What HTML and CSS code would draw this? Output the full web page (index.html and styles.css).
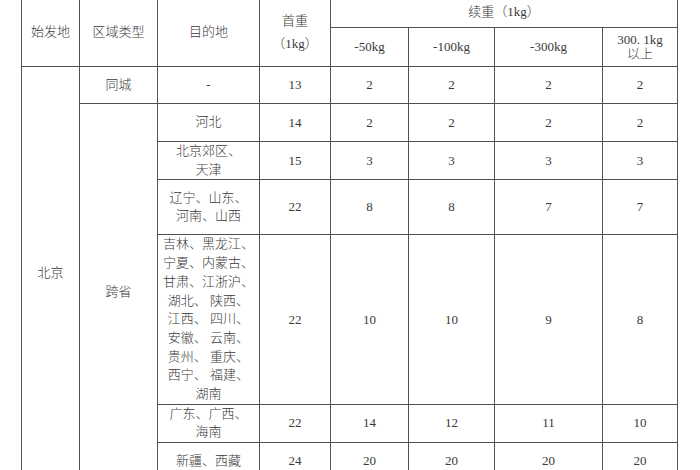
FILE: index.html
```html
<!DOCTYPE html>
<html lang="zh-CN">
<head>
<meta charset="utf-8">
<link rel="stylesheet" href="styles.css">
</head>
<body>
<table class="rates">
  <colgroup>
    <col class="w-origin">
    <col class="w-type">
    <col class="w-dest">
    <col class="w-first">
    <col class="w-50">
    <col class="w-100">
    <col class="w-300">
    <col class="w-over">
  </colgroup>
  <tr class="row-h1">
    <th rowspan="2">始发地</th>
    <th rowspan="2">区域类型</th>
    <th rowspan="2">目的地</th>
    <th rowspan="2" class="stack">首重<br>（1kg）</th>
    <th colspan="4">续重（1kg）</th>
  </tr>
  <tr class="row-h2">
    <th>-50kg</th>
    <th>-100kg</th>
    <th>-300kg</th>
    <th class="tight">300. 1kg<br>以上</th>
  </tr>
  <tr class="row-a">
    <td rowspan="7">北京</td>
    <td>同城</td>
    <td>-</td>
    <td>13</td><td>2</td><td>2</td><td>2</td><td>2</td>
  </tr>
  <tr class="row-b">
    <td rowspan="6">跨省</td>
    <td class="dest">河北</td>
    <td>14</td><td>2</td><td>2</td><td>2</td><td>2</td>
  </tr>
  <tr class="row-b">
    <td class="dest">北京郊区、<br>天津</td>
    <td>15</td><td>3</td><td>3</td><td>3</td><td>3</td>
  </tr>
  <tr class="row-c">
    <td class="dest">辽宁、山东、<br>河南、山西</td>
    <td>22</td><td>8</td><td>8</td><td>7</td><td>7</td>
  </tr>
  <tr class="row-d">
    <td class="dest">吉林、黑龙江、<br>宁夏、内蒙古、<br>甘肃、江浙沪、<br>湖北、 陕西、<br>江西、 四川、<br>安徽、 云南、<br>贵州、 重庆、<br>西宁、 福建、<br>湖南</td>
    <td>22</td><td>10</td><td>10</td><td>9</td><td>8</td>
  </tr>
  <tr class="row-b">
    <td class="dest">广东、广西、<br>海南</td>
    <td>22</td><td>14</td><td>12</td><td>11</td><td>10</td>
  </tr>
  <tr class="row-e">
    <td class="dest">新疆、西藏</td>
    <td>24</td><td>20</td><td>20</td><td>20</td><td>20</td>
  </tr>
</table>
</body>
</html>
```

FILE: styles.css
```css
html, body {
  margin: 0;
  padding: 0;
  background: #ffffff;
}

body {
  font-family: "Liberation Serif", "Noto Sans CJK SC", serif;
  font-size: 13px;
  font-weight: 300;
  color: #3a3a3a;
}

.rates {
  border-collapse: collapse;
  table-layout: fixed;
  width: 657px;
  margin: -4px 0 0 21px;
}

.w-origin { width: 58px; }
.w-type { width: 78px; }
.w-dest { width: 102px; }
.w-first { width: 71px; }
.w-50 { width: 78px; }
.w-100 { width: 86px; }
.w-300 { width: 108px; }
.w-over { width: 75px; }

.rates th,
.rates td {
  border: 1px solid #505050;
  padding: 0 2px;
  text-align: center;
  vertical-align: middle;
  font-weight: 300;
  line-height: 18px;
  white-space: nowrap;
  overflow: hidden;
}

.rates .stack { line-height: 23px; }
.rates .tight { line-height: 14px; }
.rates .dest { line-height: 18.7px; }

.row-h1 { height: 31px; }
.row-h2 { height: 39px; }
.row-a { height: 37px; }
.row-b { height: 38px; }
.row-c { height: 55px; }
.row-d { height: 169px; }
.row-e { height: 37px; }
```
